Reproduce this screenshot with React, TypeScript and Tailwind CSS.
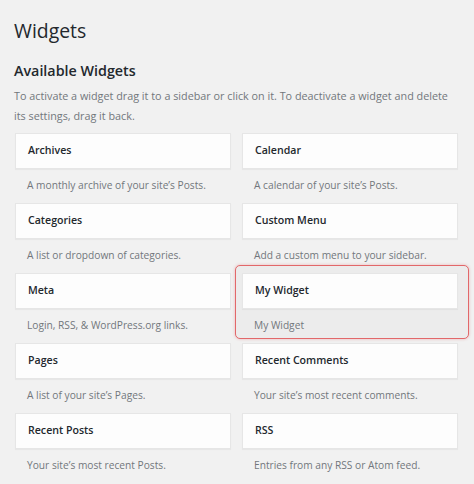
import React from 'react';

type Widget = {
    title: string;
    description: string;
    highlighted?: boolean;
};

const widgets: Widget[] = [
    { title: 'Archives', description: 'A monthly archive of your site\u2019s Posts.' },
    { title: 'Calendar', description: 'A calendar of your site\u2019s Posts.' },
    { title: 'Categories', description: 'A list or dropdown of categories.' },
    { title: 'Custom Menu', description: 'Add a custom menu to your sidebar.' },
    { title: 'Meta', description: 'Login, RSS, & WordPress.org links.' },
    { title: 'My Widget', description: 'My Widget', highlighted: true },
    { title: 'Pages', description: 'A list of your site\u2019s Pages.' },
    { title: 'Recent Comments', description: 'Your site\u2019s most recent comments.' },
    { title: 'Recent Posts', description: 'Your site\u2019s most recent Posts.' },
    { title: 'RSS', description: 'Entries from any RSS or Atom feed.' },
];

const WidgetItem: React.FC<{ widget: Widget }> = ({ widget }) => (
    <div className="relative h-[70px]">
        {widget.highlighted && (
            <div className="absolute -top-[8px] -left-[7px] -right-[11px] bottom-[4px] rounded-[5px] border border-[#e2686a] bg-[#ececec] shadow-[0_0_3px_rgba(226,104,106,0.45)]" />
        )}
        <div className="relative flex h-[36px] items-center border border-[#e6e6e6] bg-[#fdfdfd] px-[12px] text-[10.6px] font-semibold text-[#23282d] shadow-[0_1px_1px_rgba(0,0,0,0.04)]">
            {widget.title}
        </div>
        <div className="relative flex h-[34px] items-center px-[12px] text-[10.2px] text-[#72777c]">
            {widget.description}
        </div>
    </div>
);

export default function App() {
    return (
        <div
            className="min-h-screen w-[474px] bg-[#f1f1f1] pl-[15px] pr-[16px] pt-[16px]"
            style={{ fontFamily: '"Open Sans", "Noto Sans", sans-serif' }}
        >
            <h1 className="-ml-[1px] text-[19.4px] leading-[29px] font-normal text-[#23282d]">Widgets</h1>
            <h2 className="mt-[15px] -ml-[1px] text-[14.3px] leading-[22px] font-semibold text-[#23282d]">Available Widgets</h2>
            <p className="mt-[4px] -ml-[1px] text-[10.8px] leading-[20px] text-[#72777c]">
                To activate a widget drag it to a sidebar or click on it. To deactivate a widget and delete its settings, drag it back.
            </p>
            <div className="mt-[7px] grid grid-cols-2 gap-x-[11px]">
                {widgets.map(w => (
                    <WidgetItem key={w.title} widget={w} />
                ))}
            </div>
        </div>
    );
}
